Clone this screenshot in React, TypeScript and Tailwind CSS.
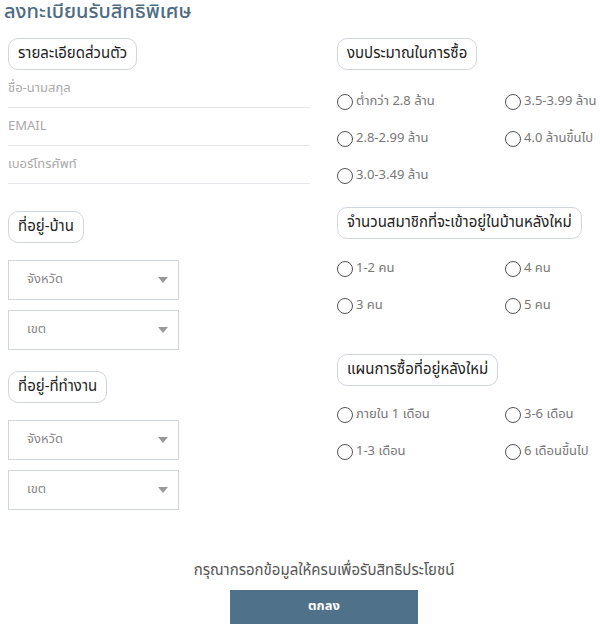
const font = { fontFamily: '"Noto Sans Thai", "Noto Sans", "Liberation Sans", sans-serif' };

function Pill({ children }: { children: React.ReactNode }) {
  return (
    <div className="inline-flex h-[32px] items-center whitespace-nowrap rounded-[10px] border border-gray-300 px-[9px] text-[15px] text-[#222]">
      {children}
    </div>
  );
}

function Radio({ label }: { label: string }) {
  return (
    <label className="flex h-[37px] items-center gap-[3px] whitespace-nowrap text-[13px] text-[#777]">
      <span className="h-[16px] w-[16px] shrink-0 rounded-full border border-[#555]" />
      {label}
    </label>
  );
}

function TextField({ placeholder }: { placeholder: string }) {
  return (
    <div className="flex h-[38px] items-center border-b border-gray-200 text-[13px] text-[#aaa]">
      {placeholder}
    </div>
  );
}

function Select({ label }: { label: string }) {
  return (
    <div className="flex h-[40px] w-[171px] items-center justify-between border border-gray-300 pl-[18px] pr-[10px] text-[13px] text-[#888]">
      <span>{label}</span>
      <svg width="10" height="6" viewBox="0 0 10 6">
        <path d="M0 0h10L5 6z" fill="#999" />
      </svg>
    </div>
  );
}

export default function App() {
  return (
    <div className="h-[625px] w-[600px] overflow-hidden bg-white" style={font}>
      <h1 className="h-[24px] pl-[4px] text-[20px] leading-[24px] font-medium text-[#4d6b83]">
        ลงทะเบียนรับสิทธิพิเศษ
      </h1>

      <div className="mt-[14px] flex gap-[27px] pl-[8px]">
        <div className="w-[302px] shrink-0">
          <Pill>รายละเอียดส่วนตัว</Pill>
          <div>
            <TextField placeholder="ชื่อ-นามสกุล" />
            <TextField placeholder="EMAIL" />
            <TextField placeholder="เบอร์โทรศัพท์" />
          </div>

          <div className="mt-[27px]">
            <Pill>ที่อยู่-บ้าน</Pill>
          </div>
          <div className="mt-[17px] flex flex-col gap-[10px]">
            <Select label="จังหวัด" />
            <Select label="เขต" />
          </div>

          <div className="mt-[21px]">
            <Pill>ที่อยู่-ที่ทำงาน</Pill>
          </div>
          <div className="mt-[17px] flex flex-col gap-[10px]">
            <Select label="จังหวัด" />
            <Select label="เขต" />
          </div>
        </div>

        <div className="min-w-0 flex-1">
          <Pill>งบประมาณในการซื้อ</Pill>
          <div className="mt-[13px] grid grid-cols-[168px_1fr]">
            <Radio label="ต่ำกว่า 2.8 ล้าน" />
            <Radio label="3.5-3.99 ล้าน" />
            <Radio label="2.8-2.99 ล้าน" />
            <Radio label="4.0 ล้านขึ้นไป" />
            <Radio label="3.0-3.49 ล้าน" />
          </div>

          <div className="mt-[13px]">
            <Pill>จำนวนสมาชิกที่จะเข้าอยู่ในบ้านหลังใหม่</Pill>
          </div>
          <div className="mt-[11px] grid grid-cols-[168px_1fr]">
            <Radio label="1-2 คน" />
            <Radio label="4 คน" />
            <Radio label="3 คน" />
            <Radio label="5 คน" />
          </div>

          <div className="mt-[30px]">
            <Pill>แผนการซื้อที่อยู่หลังใหม่</Pill>
          </div>
          <div className="mt-[10px] grid grid-cols-[168px_1fr]">
            <Radio label="ภายใน 1 เดือน" />
            <Radio label="3-6 เดือน" />
            <Radio label="1-3 เดือน" />
            <Radio label="6 เดือนขึ้นไป" />
          </div>
        </div>
      </div>

      <div className="mt-[50px] flex flex-col items-center pl-[48px]">
        <p className="text-[15px] text-[#555]">กรุณากรอกข้อมูลให้ครบเพื่อรับสิทธิประโยชน์</p>
        <button className="mt-[7px] h-[34px] w-[188px] bg-[#4f7189] text-[13px] font-bold text-white">
          ตกลง
        </button>
      </div>
    </div>
  );
}
